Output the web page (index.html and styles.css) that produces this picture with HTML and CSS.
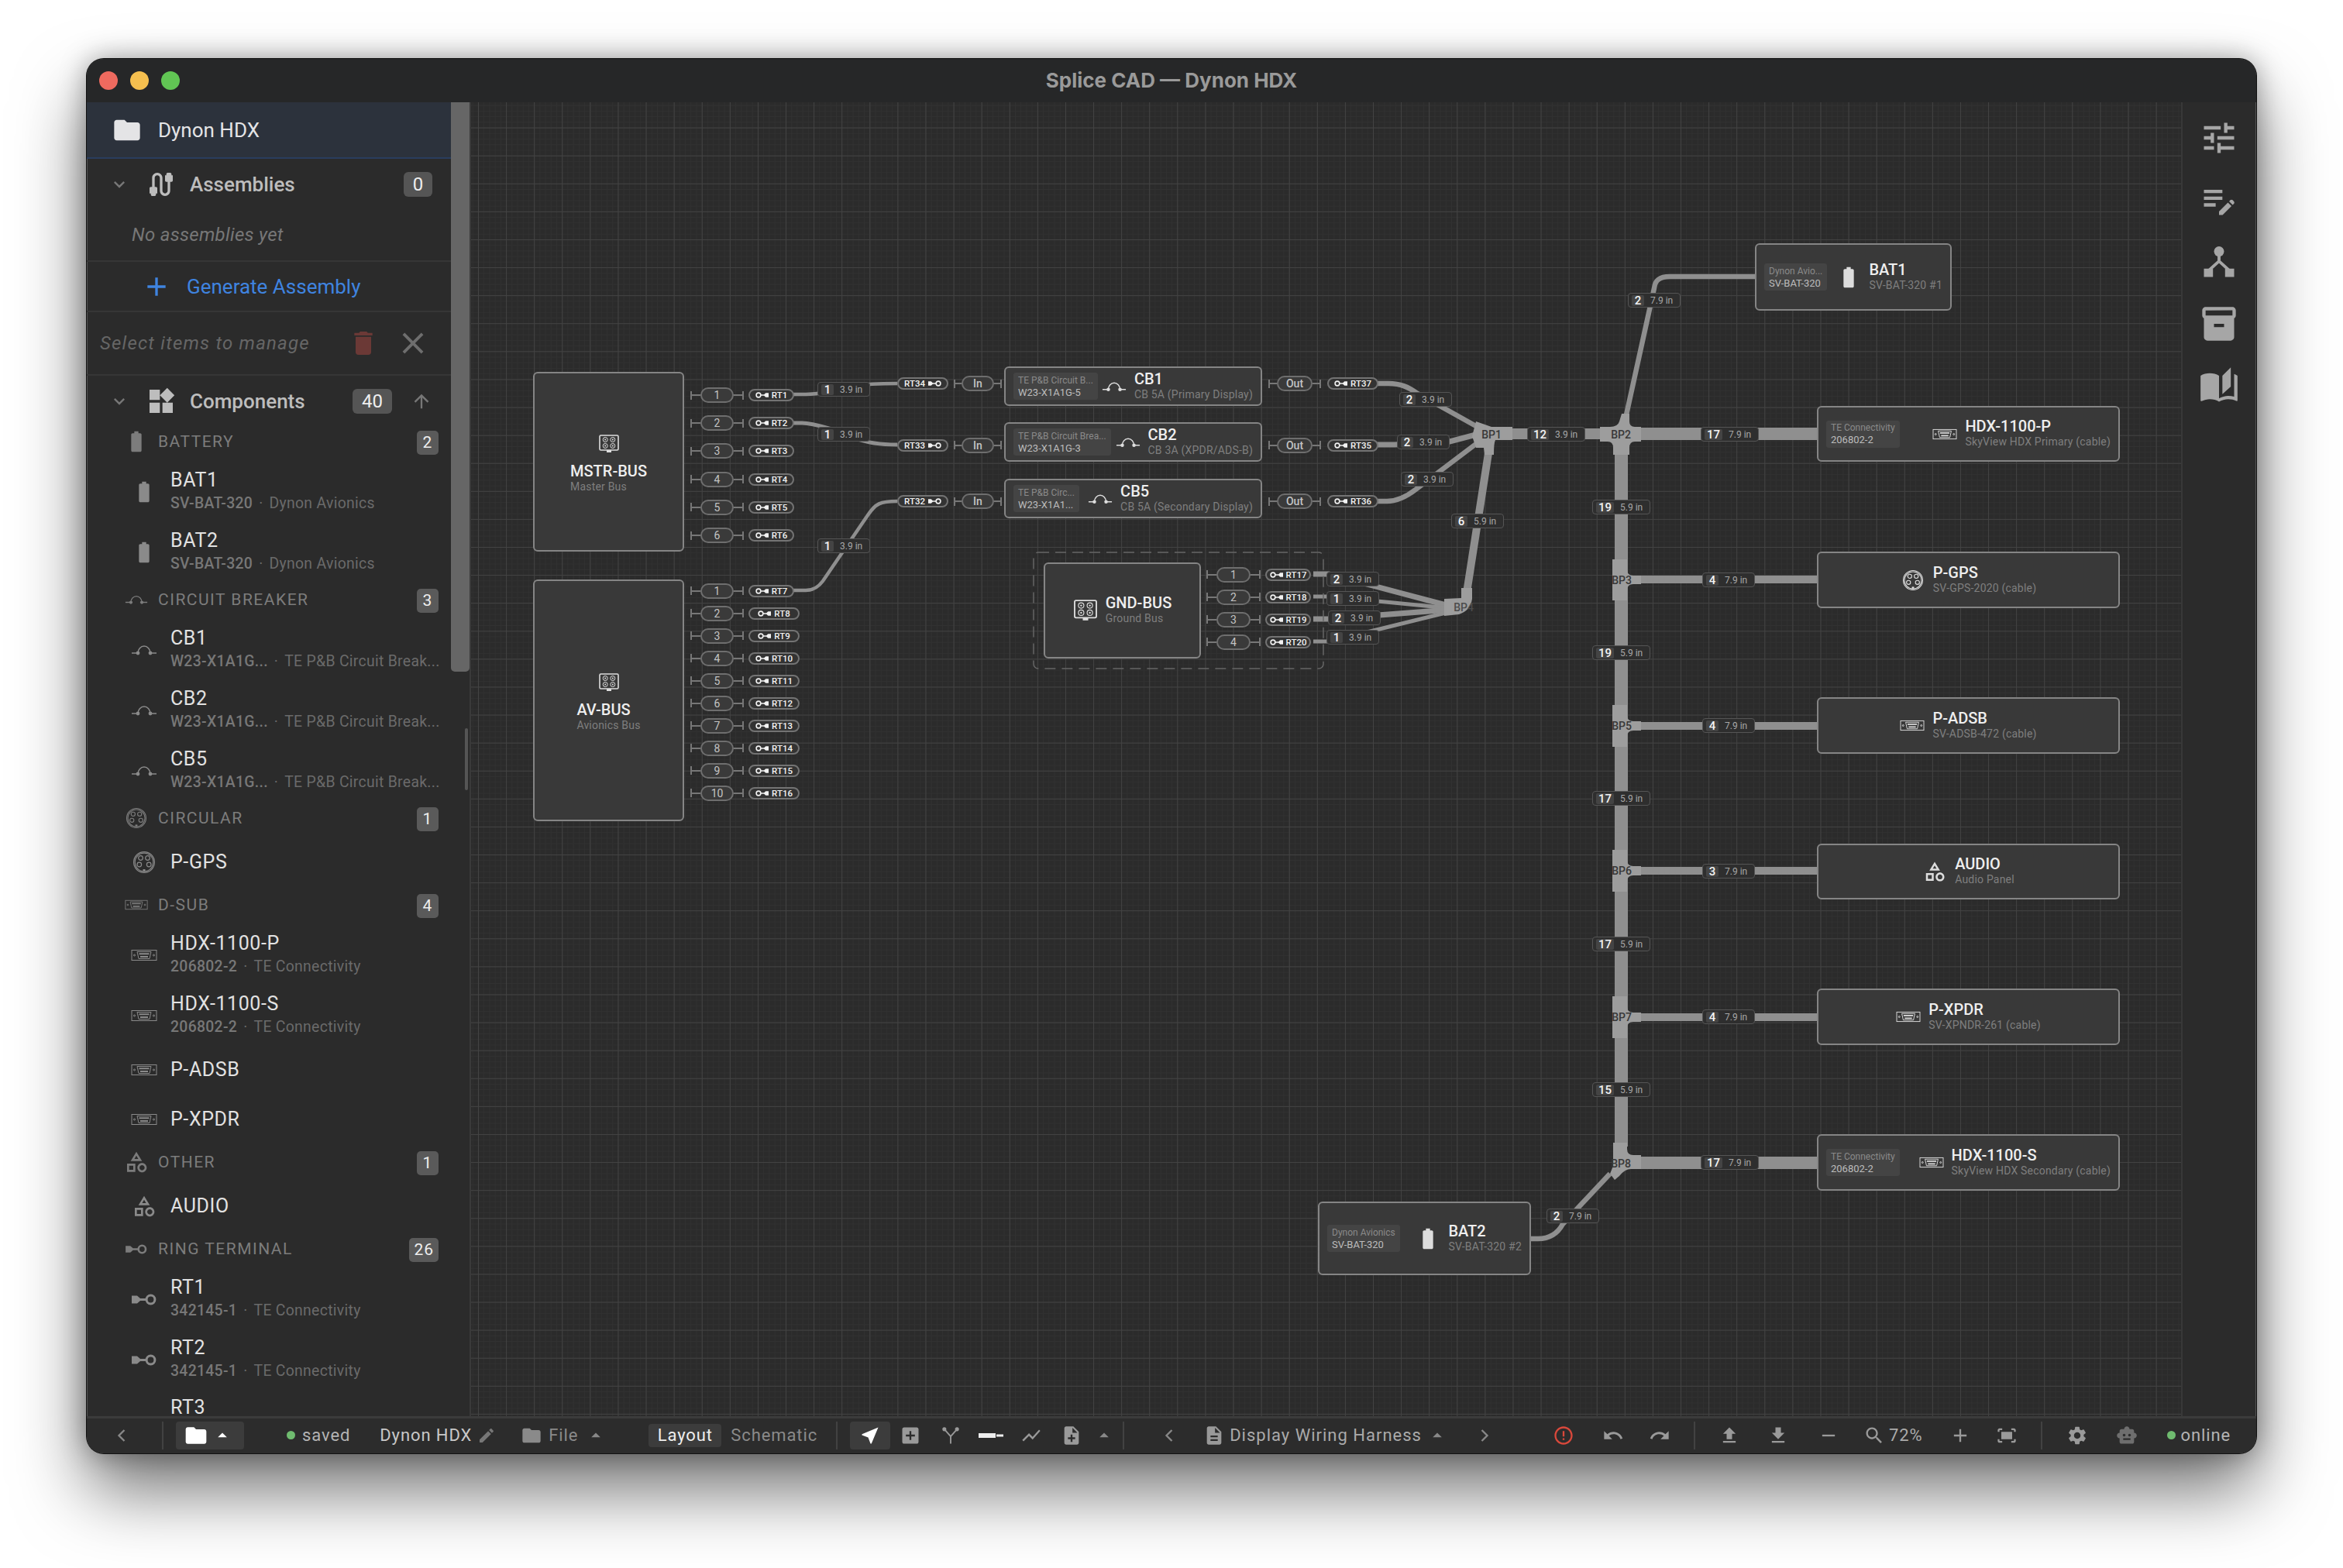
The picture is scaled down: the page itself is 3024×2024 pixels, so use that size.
FILE: index.html
```html
<!DOCTYPE html>
<html lang="en">
<head>
    <meta charset="UTF-8">
    <title>Splice CAD — Dynon HDX</title>
    <link rel="stylesheet" href="styles.css">
</head>
<body>
    <svg class="defs" width="0" height="0">
        <symbol id="i-folder" viewBox="0 0 24 24"><path d="M10 4H4c-1.1 0-1.99.9-1.99 2L2 18c0 1.1.9 2 2 2h16c1.1 0 2-.9 2-2V8c0-1.1-.9-2-2-2h-8l-2-2z"/></symbol>
        <symbol id="i-more" viewBox="0 0 24 24"><path d="M16.59 8.59L12 13.17 7.41 8.59 6 10l6 6 6-6z"/></symbol>
        <symbol id="i-cable" viewBox="0 0 24 24"><path d="M20 5V4c0-.55-.45-1-1-1h-2c-.55 0-1 .45-1 1v1h-1v4c0 .55.45 1 1 1h1v7c0 1.1-.9 2-2 2s-2-.9-2-2V7c0-2.21-1.79-4-4-4S5 4.79 5 7v7H4c-.55 0-1 .45-1 1v4h1v1c0 .55.45 1 1 1h2c.55 0 1-.45 1-1v-1h1v-4c0-.55-.45-1-1-1H7V7c0-1.1.9-2 2-2s2 .9 2 2v10c0 2.21 1.79 4 4 4s4-1.79 4-4v-7h1c.55 0 1-.45 1-1V5h-1z"/></symbol>
        <symbol id="i-add" viewBox="0 0 24 24"><path d="M19 13h-6v6h-2v-6H5v-2h6V5h2v6h6v2z"/></symbol>
        <symbol id="i-trash" viewBox="0 0 24 24"><path d="M6 19c0 1.1.9 2 2 2h8c1.1 0 2-.9 2-2V7H6v12zM19 4h-3.5l-1-1h-5l-1 1H5v2h14V4z"/></symbol>
        <symbol id="i-close" viewBox="0 0 24 24"><path d="M19 6.41L17.59 5 12 10.59 6.41 5 5 6.41 10.59 12 5 17.59 6.41 19 12 13.41 17.59 19 19 17.59 13.41 12z"/></symbol>
        <symbol id="i-widgets" viewBox="0 0 24 24"><path d="M13 13v8h8v-8h-8zM3 21h8v-8H3v8zM3 3v8h8V3H3zm13.66-1.31L11 7.34 16.66 13l5.66-5.66-5.66-5.65z"/></symbol>
        <symbol id="i-up" viewBox="0 0 24 24"><path d="M4 12l1.41 1.41L11 7.83V20h2V7.83l5.58 5.59L20 12l-8-8-8 8z"/></symbol>
        <symbol id="i-battery" viewBox="0 0 24 24"><path d="M15.67 4H14V2h-4v2H8.33C7.6 4 7 4.6 7 5.33v15.33C7 21.4 7.6 22 8.33 22h7.33c.74 0 1.34-.6 1.34-1.33V5.33C17 4.6 16.4 4 15.67 4z"/></symbol>
        <symbol id="i-breaker" viewBox="0 0 34 24"><path d="M1 16h8M25 16h8M9 16a8 9 0 0 1 16 0" fill="none" stroke="currentColor" stroke-width="1.5"/><circle cx="9" cy="16" r="2.4"/><circle cx="25" cy="16" r="2.4"/></symbol>
        <symbol id="i-circular" viewBox="0 0 30 30"><g fill="none" stroke="currentColor" stroke-width="1.2"><circle cx="15" cy="15" r="13.4"/><circle cx="15" cy="15" r="11.8"/><circle cx="10.5" cy="9.5" r="2.8"/><circle cx="19.5" cy="9.5" r="2.8"/><circle cx="8.8" cy="18" r="2.8"/><circle cx="21.2" cy="18" r="2.8"/></g><rect x="13.5" y="24" width="3" height="3"/></symbol>
        <symbol id="i-dsub" viewBox="0 0 34 16"><g fill="none" stroke="currentColor" stroke-width="1"><rect x="1" y="1.5" width="32" height="13"/><path d="M8 3.5h18l-2 9H10z"/><circle cx="4.5" cy="8" r="1"/><circle cx="29.5" cy="8" r="1"/></g><path d="M10.5 5.2h13v2h-13zM12 9h10v2H12z"/></symbol>
        <symbol id="i-other" viewBox="0 0 24 24"><path d="M12 2l-5.5 9h11L12 2zm0 3.84L13.93 9h-3.87L12 5.84zM17.5 13c-2.49 0-4.5 2.01-4.5 4.5s2.01 4.5 4.5 4.5 4.5-2.01 4.5-4.5-2.01-4.5-4.5-4.5zm0 7c-1.38 0-2.5-1.12-2.5-2.5s1.12-2.5 2.5-2.5 2.5 1.12 2.5 2.5-1.12 2.5-2.5 2.5zM3 21.5h8v-8H3v8zm2-6h4v4H5v-4z"/></symbol>
        <symbol id="i-ring" viewBox="0 0 32 15"><path d="M0 2.5h7l4 3.5h8v3h-8l-4 3.5H0z"/><circle cx="24.5" cy="7.5" r="5.4" fill="none" stroke="currentColor" stroke-width="3"/></symbol>
        <symbol id="i-ring-r" viewBox="0 0 32 15"><path d="M32 2.5h-7l-4 3.5h-8v3h8l4 3.5h7z"/><circle cx="7.5" cy="7.5" r="5.4" fill="none" stroke="currentColor" stroke-width="3"/></symbol>
        <symbol id="i-bus" viewBox="0 0 26 24"><rect x="1" y="1" width="24" height="19" rx="1.5" fill="none" stroke="currentColor" stroke-width="1.6"/><g fill="none" stroke="currentColor" stroke-width="1"><circle cx="8.2" cy="6.5" r="3"/><circle cx="17.8" cy="6.5" r="3"/><circle cx="8.2" cy="14.5" r="3"/><circle cx="17.8" cy="14.5" r="3"/></g><circle cx="8.2" cy="6.5" r="1"/><circle cx="17.8" cy="6.5" r="1"/><circle cx="8.2" cy="14.5" r="1"/><circle cx="17.8" cy="14.5" r="1"/><rect x="10" y="20" width="6" height="3"/></symbol>
        <symbol id="i-tune" viewBox="0 0 24 24"><path d="M3 17v2h6v-2H3zM3 5v2h10V5H3zm10 16v-2h8v-2h-8v-2h-2v6h2zM7 9v2H3v2h4v2h2V9H7zm14 4v-2H11v2h10zm-6-4h2V7h4V5h-4V3h-2v6z"/></symbol>
        <symbol id="i-note" viewBox="0 0 24 24"><path d="M3 10h11v2H3v-2zm0-2h11V6H3v2zm0 8h7v-2H3v2zm15.01-3.13.71-.71c.39-.39 1.02-.39 1.41 0l.71.71c.39.39.39 1.02 0 1.41l-.71.71-2.12-2.12zm-.71.71-5.3 5.3V21h2.12l5.3-5.3-2.12-2.12z"/></symbol>
        <symbol id="i-tree" viewBox="0 0 24 24"><circle cx="12" cy="5.8" r="3"/><path d="M12 8v3.6M12 11.6L6 17M12 11.6L18 17" fill="none" stroke="currentColor" stroke-width="1.8"/><path d="M3 16h5.4v5H3zM15.6 16H21v5h-5.4z"/></symbol>
        <symbol id="i-archive" viewBox="0 0 24 24"><path d="M20 2H4c-1 0-2 .9-2 2v3.01c0 .72.43 1.34 1 1.69V20c0 1.1 1.1 2 2 2h14c.9 0 2-.9 2-2V8.7c.57-.35 1-.97 1-1.69V4c0-1.1-1-2-2-2zm-5 12H9v-2h6v2zm5-7H4V4l16-.02V7z"/></symbol>
        <symbol id="i-book" viewBox="0 0 24 24"><path d="M19 1l-5 5v11l5-4.5V1zM1 6v14.65c0 .25.25.5.5.5.1 0 .15-.05.25-.05C3.1 20.45 5.05 20 6.5 20c1.95 0 4.05.4 5.5 1.5V6c-1.45-1.1-3.55-1.5-5.5-1.5S2.45 4.9 1 6zm22 13.5V6c-.6-.45-1.25-.75-2-1v13.5c-1.1-.35-2.3-.5-3.5-.5-1.7 0-4.15.65-5.5 1.5v2c1.35-.85 3.8-1.5 5.5-1.5 1.65 0 3.35.3 4.75 1.05.1.05.15.05.25.05.25 0 .5-.25.5-.5v-1.1z"/></symbol>
        <symbol id="i-left" viewBox="0 0 24 24"><path d="M15 6l-6 6 6 6" fill="none" stroke="currentColor" stroke-width="2"/></symbol>
        <symbol id="i-right" viewBox="0 0 24 24"><path d="M9 6l6 6-6 6" fill="none" stroke="currentColor" stroke-width="2"/></symbol>
        <symbol id="i-caret" viewBox="0 0 24 24"><path d="M7 14l5-5 5 5z"/></symbol>
        <symbol id="i-edit" viewBox="0 0 24 24"><path d="M3 17.25V21h3.75L17.81 9.94l-3.75-3.75L3 17.25zM20.71 7.04c.39-.39.39-1.02 0-1.41l-2.34-2.34c-.39-.39-1.02-.39-1.41 0l-1.83 1.83 3.75 3.75 1.83-1.83z"/></symbol>
        <symbol id="i-nearme" viewBox="0 0 24 24"><path d="M21 3L3 10.53v.98l6.84 2.65L12.48 21h.98L21 3z"/></symbol>
        <symbol id="i-addbox" viewBox="0 0 24 24"><path d="M19 3H5c-1.1 0-2 .9-2 2v14c0 1.1.9 2 2 2h14c1.1 0 2-.9 2-2V5c0-1.1-.9-2-2-2zm-2 10h-4v4h-2v-4H7v-2h4V7h2v4h4v2z"/></symbol>
        <symbol id="i-split" viewBox="0 0 24 24"><path d="M5 5l7 8v8M19 5l-7 8" fill="none" stroke="currentColor" stroke-width="1.6"/><circle cx="5" cy="5" r="2.2"/><circle cx="19" cy="5" r="2.2"/></symbol>
        <symbol id="i-wire" viewBox="0 0 32 12"><path d="M0 3h22v6H0zM23 4.5h9v3h-9z"/></symbol>
        <symbol id="i-chart" viewBox="0 0 24 24"><path d="M3.5 18.49l6-6.01 4 4L22 6.92l-1.41-1.41-7.09 7.97-4-4L2 16.99z"/></symbol>
        <symbol id="i-noteadd" viewBox="0 0 24 24"><path d="M14 2H6c-1.1 0-1.99.9-1.99 2L4 20c0 1.1.89 2 1.99 2H18c1.1 0 2-.9 2-2V8l-6-6zm2 14h-3v3h-2v-3H8v-2h3v-3h2v3h3v2zm-3-7V3.5L18.5 9H13z"/></symbol>
        <symbol id="i-doc" viewBox="0 0 24 24"><path d="M14 2H6c-1.1 0-1.99.9-1.99 2L4 20c0 1.1.89 2 1.99 2H18c1.1 0 2-.9 2-2V8l-6-6zm2 16H8v-2h8v2zm0-4H8v-2h8v2zm-3-5V3.5L18.5 9H13z"/></symbol>
        <symbol id="i-error" viewBox="0 0 24 24"><path d="M11 15h2v2h-2zm0-8h2v6h-2zm.99-5C6.47 2 2 6.48 2 12s4.47 10 9.99 10C17.52 22 22 17.52 22 12S17.52 2 11.99 2zM12 20c-4.42 0-8-3.58-8-8s3.58-8 8-8 8 3.58 8 8-3.58 8-8 8z"/></symbol>
        <symbol id="i-undo" viewBox="0 0 24 24"><path d="M12.5 8c-2.65 0-5.05.99-6.9 2.6L2 7v9h9l-3.62-3.62c1.39-1.16 3.16-1.88 5.12-1.88 3.54 0 6.55 2.31 7.6 5.5l2.37-.78C21.08 11.03 17.15 8 12.5 8z"/></symbol>
        <symbol id="i-redo" viewBox="0 0 24 24"><path d="M18.4 10.6C16.55 8.99 14.15 8 11.5 8c-4.65 0-8.58 3.03-9.96 7.22L3.9 16c1.05-3.19 4.05-5.5 7.6-5.5 1.95 0 3.73.72 5.12 1.88L13 16h9V7l-3.6 3.6z"/></symbol>
        <symbol id="i-upload" viewBox="0 0 24 24"><path d="M9 16h6v-6h4l-7-7-7 7h4zm-4 2h14v2H5z"/></symbol>
        <symbol id="i-download" viewBox="0 0 24 24"><path d="M19 9h-4V3H9v6H5l7 7 7-7zM5 18v2h14v-2H5z"/></symbol>
        <symbol id="i-minus" viewBox="0 0 24 24"><path d="M19 13H5v-2h14v2z"/></symbol>
        <symbol id="i-search" viewBox="0 0 24 24"><path d="M15.5 14h-.79l-.28-.27C15.41 12.59 16 11.11 16 9.5 16 5.91 13.09 3 9.5 3S3 5.91 3 9.5 5.91 16 9.5 16c1.61 0 3.09-.59 4.23-1.57l.27.28v.79l5 4.99L20.49 19l-4.99-5zm-6 0C7.01 14 5 11.99 5 9.5S7.01 5 9.5 5 14 7.01 14 9.5 11.99 14 9.5 14z"/></symbol>
        <symbol id="i-fit" viewBox="0 0 24 24"><path d="M17 4h3c1.1 0 2 .9 2 2v2h-2V6h-3V4zM4 8V6h3V4H4c-1.1 0-2 .9-2 2v2h2zm16 8v2h-3v2h3c1.1 0 2-.9 2-2v-2h-2zM7 18H4v-2H2v2c0 1.1.9 2 2 2h3v-2zM18 8H6v8h12V8z"/></symbol>
        <symbol id="i-gear" viewBox="0 0 24 24"><path d="M19.14 12.94c.04-.3.06-.61.06-.94 0-.32-.02-.64-.07-.94l2.03-1.58c.18-.14.23-.41.12-.61l-1.92-3.32c-.12-.22-.37-.29-.59-.22l-2.39.96c-.5-.38-1.03-.7-1.62-.94l-.36-2.54c-.04-.24-.24-.41-.48-.41h-3.84c-.24 0-.43.17-.47.41l-.36 2.54c-.59.24-1.13.57-1.62.94l-2.39-.96c-.22-.08-.47 0-.59.22L2.74 8.87c-.12.21-.08.47.12.61l2.03 1.58c-.05.3-.09.63-.09.94s.02.64.07.94l-2.03 1.58c-.18.14-.23.41-.12.61l1.92 3.32c.12.22.37.29.59.22l2.39-.96c.5.38 1.03.7 1.62.94l.36 2.54c.05.24.24.41.48.41h3.84c.24 0 .44-.17.47-.41l.36-2.54c.59-.24 1.13-.56 1.62-.94l2.39.96c.22.08.47 0 .59-.22l1.92-3.32c.12-.22.07-.47-.12-.61l-2.01-1.58zM12 15.6c-1.98 0-3.6-1.62-3.6-3.6s1.62-3.6 3.6-3.6 3.6 1.62 3.6 3.6-1.62 3.6-3.6 3.6z"/></symbol>
        <symbol id="i-robot" viewBox="0 0 24 24"><path d="M20 9V7c0-1.1-.9-2-2-2h-3c0-1.66-1.34-3-3-3S9 3.34 9 5H6c-1.1 0-2 .9-2 2v2c-1.66 0-3 1.34-3 3s1.34 3 3 3v4c0 1.1.9 2 2 2h12c1.1 0 2-.9 2-2v-4c1.66 0 3-1.34 3-3s-1.34-3-3-3zM7.5 11.5c0-.83.67-1.5 1.5-1.5s1.5.67 1.5 1.5S9.83 13 9 13s-1.5-.67-1.5-1.5zM16 17H8v-2h8v2zm-1-4c-.83 0-1.5-.67-1.5-1.5S14.17 10 15 10s1.5.67 1.5 1.5S15.83 13 15 13z"/></symbol>
    </svg>

    <div class="window">
        <div class="titlebar">
            <div class="lights"><i class="light red"></i><i class="light yellow"></i><i class="light green"></i></div>
            <div class="title">Splice CAD — Dynon HDX</div>
        </div>

        <div class="main">
            <aside class="sidebar">
                <div class="side-list">
                    <div class="proj"><svg class="ic proj-ic"><use href="#i-folder"/></svg><span>Dynon HDX</span></div>
                    <div class="sec sec-asm">
                        <svg class="ic sec-more"><use href="#i-more"/></svg>
                        <svg class="ic sec-ic"><use href="#i-cable"/></svg>
                        <span class="sec-name">Assemblies</span>
                        <span class="badge">0</span>
                    </div>
                    <div class="empty">No assemblies yet</div>
                    <div class="gen"><svg class="ic"><use href="#i-add"/></svg><span>Generate Assembly</span></div>
                    <div class="manage">
                        <span>Select items to manage</span>
                        <svg class="ic trash"><use href="#i-trash"/></svg>
                        <svg class="ic close"><use href="#i-close"/></svg>
                    </div>
                    <div class="sec sec-comp">
                        <svg class="ic sec-more"><use href="#i-more"/></svg>
                        <svg class="ic sec-ic"><use href="#i-widgets"/></svg>
                        <span class="sec-name">Components</span>
                        <span class="badge">40</span>
                        <svg class="ic sec-up"><use href="#i-up"/></svg>
                    </div>

                    <div class="grp"><span class="grp-ic"><svg class="ic ic-std"><use href="#i-battery"/></svg></span><span class="grp-name">BATTERY</span><span class="count">2</span></div>
                    <div class="item"><span class="item-ic"><svg class="ic ic-std"><use href="#i-battery"/></svg></span><div class="item-txt"><div class="item-name">BAT1</div><div class="item-sub"><b>SV-BAT-320</b><i>·</i>Dynon Avionics</div></div></div>
                    <div class="item"><span class="item-ic"><svg class="ic ic-std"><use href="#i-battery"/></svg></span><div class="item-txt"><div class="item-name">BAT2</div><div class="item-sub"><b>SV-BAT-320</b><i>·</i>Dynon Avionics</div></div></div>

                    <div class="grp"><span class="grp-ic"><svg class="ic ic-brk"><use href="#i-breaker"/></svg></span><span class="grp-name">CIRCUIT BREAKER</span><span class="count">3</span></div>
                    <div class="item"><span class="item-ic"><svg class="ic ic-brk"><use href="#i-breaker"/></svg></span><div class="item-txt"><div class="item-name">CB1</div><div class="item-sub"><b>W23-X1A1G...</b><i>·</i>TE P&amp;B Circuit Break...</div></div></div>
                    <div class="item"><span class="item-ic"><svg class="ic ic-brk"><use href="#i-breaker"/></svg></span><div class="item-txt"><div class="item-name">CB2</div><div class="item-sub"><b>W23-X1A1G...</b><i>·</i>TE P&amp;B Circuit Break...</div></div></div>
                    <div class="item"><span class="item-ic"><svg class="ic ic-brk"><use href="#i-breaker"/></svg></span><div class="item-txt"><div class="item-name">CB5</div><div class="item-sub"><b>W23-X1A1G...</b><i>·</i>TE P&amp;B Circuit Break...</div></div></div>

                    <div class="grp"><span class="grp-ic"><svg class="ic ic-circ"><use href="#i-circular"/></svg></span><span class="grp-name">CIRCULAR</span><span class="count">1</span></div>
                    <div class="item one"><span class="item-ic"><svg class="ic ic-circ"><use href="#i-circular"/></svg></span><div class="item-txt"><div class="item-name">P-GPS</div></div></div>

                    <div class="grp"><span class="grp-ic"><svg class="ic ic-dsub"><use href="#i-dsub"/></svg></span><span class="grp-name">D-SUB</span><span class="count">4</span></div>
                    <div class="item"><span class="item-ic"><svg class="ic ic-dsub"><use href="#i-dsub"/></svg></span><div class="item-txt"><div class="item-name">HDX-1100-P</div><div class="item-sub"><b>206802-2</b><i>·</i>TE Connectivity</div></div></div>
                    <div class="item"><span class="item-ic"><svg class="ic ic-dsub"><use href="#i-dsub"/></svg></span><div class="item-txt"><div class="item-name">HDX-1100-S</div><div class="item-sub"><b>206802-2</b><i>·</i>TE Connectivity</div></div></div>
                    <div class="item one"><span class="item-ic"><svg class="ic ic-dsub"><use href="#i-dsub"/></svg></span><div class="item-txt"><div class="item-name">P-ADSB</div></div></div>
                    <div class="item one"><span class="item-ic"><svg class="ic ic-dsub"><use href="#i-dsub"/></svg></span><div class="item-txt"><div class="item-name">P-XPDR</div></div></div>

                    <div class="grp"><span class="grp-ic"><svg class="ic ic-std"><use href="#i-other"/></svg></span><span class="grp-name">OTHER</span><span class="count">1</span></div>
                    <div class="item one"><span class="item-ic"><svg class="ic ic-std"><use href="#i-other"/></svg></span><div class="item-txt"><div class="item-name">AUDIO</div></div></div>

                    <div class="grp"><span class="grp-ic"><svg class="ic ic-ring"><use href="#i-ring"/></svg></span><span class="grp-name">RING TERMINAL</span><span class="count">26</span></div>
                    <div class="item"><span class="item-ic"><svg class="ic ic-ring"><use href="#i-ring"/></svg></span><div class="item-txt"><div class="item-name">RT1</div><div class="item-sub"><b>342145-1</b><i>·</i>TE Connectivity</div></div></div>
                    <div class="item"><span class="item-ic"><svg class="ic ic-ring"><use href="#i-ring"/></svg></span><div class="item-txt"><div class="item-name">RT2</div><div class="item-sub"><b>342145-1</b><i>·</i>TE Connectivity</div></div></div>
                    <div class="item cut"><span class="item-ic"><svg class="ic ic-ring"><use href="#i-ring"/></svg></span><div class="item-txt"><div class="item-name">RT3</div></div></div>
                </div>
                <div class="rail"><div class="thumb"></div></div>
                <div class="thumb-thin"></div>
            </aside>

            <div class="canvas">
                <svg class="wires" viewBox="608 132 2207 1696">
                    <g class="w">
                        <path class="w4" d="M1021 509H1040C1048 509 1060 508 1075 504L1105 498C1115 496 1130 495 1158 495"/>
                        <path class="w5" d="M1021 546H1035C1050 546 1065 552 1080 556L1105 566C1120 572 1135 574 1158 574"/>
                        <path class="w4" d="M1021 762H1040C1050 762 1056 758 1062 750L1120 665C1130 650 1136 647 1158 647"/>
                        <path class="w6" d="M1774 495H1792C1808 495 1818 500 1828 507L1905 550"/>
                        <path class="w7" d="M1774 574H1800L1871 570L1905 561"/>
                        <path class="w6" d="M1774 647H1790C1802 647 1814 642 1827 632L1905 573"/>
                        <path class="w14" d="M1950 560H2070"/>
                        <path class="w10" d="M1893 765L1921 585"/>
                        <path class="w7" d="M1695 741H1715L1870 782"/>
                        <path class="w5" d="M1695 770H1715L1870 785"/>
                        <path class="w7" d="M1695 799H1715L1870 787"/>
                        <path class="w5" d="M1695 828H1715L1870 790"/>
                        <path class="w17" d="M2092.5 575V1480"/>
                        <path class="w16" d="M2110 560H2345"/>
                        <path class="w16" d="M2110 1501H2345"/>
                        <path class="w10" d="M2110 748H2345M2110 937H2345M2110 1124H2345M2110 1313H2345"/>
                        <path class="w6" d="M2265 357H2155C2142 357 2136 362 2135 372L2098 540"/>
                        <path class="w6" d="M1976 1599H1985C2000 1599 2010 1593 2017 1580L2078 1515"/>
                    </g>
                    <g class="bp">
                        <path d="M1905 544L1925 551H1952V568H1930Q1928 572 1928 587H1916L1915 578H1905L1900 563Z"/>
                        <path d="M2093 534H2103V544Q2103 551 2110 551H2118V570H2110Q2103 570 2103 578V587H2082V578Q2082 570 2075 570H2065V551H2078Q2088 551 2090 544Z"/>
                        <path d="M2081 722H2100V735Q2100 743 2108 743H2118V754H2108Q2100 754 2100 762V775H2081Z"/>
                        <path d="M2081 910H2100V923Q2100 931 2108 931H2118V943H2108Q2100 943 2100 951V964H2081Z"/>
                        <path d="M2081 1097H2100V1110Q2100 1118 2108 1118H2118V1130H2108Q2100 1130 2100 1138V1151H2081Z"/>
                        <path d="M2081 1286H2100V1299Q2100 1307 2108 1307H2118V1319H2108Q2100 1319 2100 1327V1340H2081Z"/>
                        <path d="M2082 1475H2100V1483Q2100 1491 2108 1491H2118V1509H2105Q2097 1509 2090 1518L2084 1523L2078 1515L2082 1505Z"/>
                        <path d="M1864 773L1886 772V759H1900V773Q1898 788 1883 793L1864 795Z"/>
                    </g>
                </svg>

                <div class="bp-name at-bp1">BP1</div>
                <div class="bp-name at-bp2">BP2</div>
                <div class="bp-name at-bp3">BP3</div>
                <div class="bp-name at-bp5">BP5</div>
                <div class="bp-name at-bp6">BP6</div>
                <div class="bp-name at-bp7">BP7</div>
                <div class="bp-name at-bp8">BP8</div>
                <div class="bp-name at-bp4">BP4</div>

                <div class="node bus at-mstr">
                    <svg class="ic bus-ic"><use href="#i-bus"/></svg>
                    <div class="txt"><div class="name">MSTR-BUS</div><div class="desc">Master Bus</div></div>
                </div>
                <div class="ports ports-mstr">
                    <div class="port"><div class="pin"><span>1</span></div><div class="chip"><svg class="ring"><use href="#i-ring-r"/></svg>RT1</div></div>
                    <div class="port"><div class="pin"><span>2</span></div><div class="chip"><svg class="ring"><use href="#i-ring-r"/></svg>RT2</div></div>
                    <div class="port"><div class="pin"><span>3</span></div><div class="chip"><svg class="ring"><use href="#i-ring-r"/></svg>RT3</div></div>
                    <div class="port"><div class="pin"><span>4</span></div><div class="chip"><svg class="ring"><use href="#i-ring-r"/></svg>RT4</div></div>
                    <div class="port"><div class="pin"><span>5</span></div><div class="chip"><svg class="ring"><use href="#i-ring-r"/></svg>RT5</div></div>
                    <div class="port"><div class="pin"><span>6</span></div><div class="chip"><svg class="ring"><use href="#i-ring-r"/></svg>RT6</div></div>
                </div>

                <div class="node bus at-av">
                    <svg class="ic bus-ic"><use href="#i-bus"/></svg>
                    <div class="txt"><div class="name">AV-BUS</div><div class="desc">Avionics Bus</div></div>
                </div>
                <div class="ports ports-av">
                    <div class="port"><div class="pin"><span>1</span></div><div class="chip chip-s"><svg class="ring"><use href="#i-ring-r"/></svg>RT7</div></div>
                    <div class="port"><div class="pin"><span>2</span></div><div class="chip"><svg class="ring"><use href="#i-ring-r"/></svg>RT8</div></div>
                    <div class="port"><div class="pin"><span>3</span></div><div class="chip"><svg class="ring"><use href="#i-ring-r"/></svg>RT9</div></div>
                    <div class="port"><div class="pin"><span>4</span></div><div class="chip"><svg class="ring"><use href="#i-ring-r"/></svg>RT10</div></div>
                    <div class="port"><div class="pin"><span>5</span></div><div class="chip"><svg class="ring"><use href="#i-ring-r"/></svg>RT11</div></div>
                    <div class="port"><div class="pin"><span>6</span></div><div class="chip"><svg class="ring"><use href="#i-ring-r"/></svg>RT12</div></div>
                    <div class="port"><div class="pin"><span>7</span></div><div class="chip"><svg class="ring"><use href="#i-ring-r"/></svg>RT13</div></div>
                    <div class="port"><div class="pin"><span>8</span></div><div class="chip"><svg class="ring"><use href="#i-ring-r"/></svg>RT14</div></div>
                    <div class="port"><div class="pin"><span>9</span></div><div class="chip"><svg class="ring"><use href="#i-ring-r"/></svg>RT15</div></div>
                    <div class="port"><div class="pin"><span>10</span></div><div class="chip"><svg class="ring"><use href="#i-ring-r"/></svg>RT16</div></div>
                </div>

                <div class="port cb-in at-cb1-row"><div class="chip"><span>RT34</span><svg class="ring"><use href="#i-ring"/></svg></div><div class="pin pin-s"><span>In</span></div></div>
                <div class="port cb-in at-cb2-row"><div class="chip"><span>RT33</span><svg class="ring"><use href="#i-ring"/></svg></div><div class="pin pin-s"><span>In</span></div></div>
                <div class="port cb-in at-cb5-row"><div class="chip"><span>RT32</span><svg class="ring"><use href="#i-ring"/></svg></div><div class="pin pin-s"><span>In</span></div></div>
                <div class="port cb-out at-cb1-row"><div class="pin pin-o"><span>Out</span></div><div class="chip"><svg class="ring"><use href="#i-ring-r"/></svg>RT37</div></div>
                <div class="port cb-out at-cb2-row"><div class="pin pin-o"><span>Out</span></div><div class="chip"><svg class="ring"><use href="#i-ring-r"/></svg>RT35</div></div>
                <div class="port cb-out at-cb5-row"><div class="pin pin-o"><span>Out</span></div><div class="chip"><svg class="ring"><use href="#i-ring-r"/></svg>RT36</div></div>

                <div class="node at-cb1">
                    <div class="mfg"><span>TE P&amp;B Circuit B...</span><b>W23-X1A1G-5</b></div>
                    <div class="body"><svg class="ic node-ic ic-brk"><use href="#i-breaker"/></svg><div class="txt"><div class="name">CB1</div><div class="desc">CB 5A (Primary Display)</div></div></div>
                </div>
                <div class="node at-cb2">
                    <div class="mfg"><span>TE P&amp;B Circuit Brea...</span><b>W23-X1A1G-3</b></div>
                    <div class="body"><svg class="ic node-ic ic-brk"><use href="#i-breaker"/></svg><div class="txt"><div class="name">CB2</div><div class="desc">CB 3A (XPDR/ADS-B)</div></div></div>
                </div>
                <div class="node at-cb5">
                    <div class="mfg"><span>TE P&amp;B Circ...</span><b>W23-X1A1...</b></div>
                    <div class="body"><svg class="ic node-ic ic-brk"><use href="#i-breaker"/></svg><div class="txt"><div class="name">CB5</div><div class="desc">CB 5A (Secondary Display)</div></div></div>
                </div>

                <div class="gnd-group">
                    <svg class="dash"><rect x="1" y="1" width="374" height="150" rx="6"/></svg>
                    <div class="node gnd">
                        <div class="body"><svg class="ic node-ic ic-bus"><use href="#i-bus"/></svg><div class="txt"><div class="name">GND-BUS</div><div class="desc">Ground Bus</div></div></div>
                    </div>
                </div>
                <div class="ports ports-gnd">
                    <div class="port"><div class="pin"><span>1</span></div><div class="chip"><svg class="ring"><use href="#i-ring-r"/></svg>RT17</div></div>
                    <div class="port"><div class="pin"><span>2</span></div><div class="chip"><svg class="ring"><use href="#i-ring-r"/></svg>RT18</div></div>
                    <div class="port"><div class="pin"><span>3</span></div><div class="chip"><svg class="ring"><use href="#i-ring-r"/></svg>RT19</div></div>
                    <div class="port"><div class="pin"><span>4</span></div><div class="chip"><svg class="ring"><use href="#i-ring-r"/></svg>RT20</div></div>
                </div>

                <div class="node at-bat1">
                    <div class="mfg"><span>Dynon Avio...</span><b>SV-BAT-320</b></div>
                    <div class="body"><svg class="ic node-ic ic-bat"><use href="#i-battery"/></svg><div class="txt"><div class="name">BAT1</div><div class="desc">SV-BAT-320 #1</div></div></div>
                </div>
                <div class="node at-bat2">
                    <div class="mfg"><span>Dynon Avionics</span><b>SV-BAT-320</b></div>
                    <div class="body"><svg class="ic node-ic ic-bat"><use href="#i-battery"/></svg><div class="txt"><div class="name">BAT2</div><div class="desc">SV-BAT-320 #2</div></div></div>
                </div>
                <div class="node at-hdxp">
                    <div class="mfg"><span>TE Connectivity</span><b>206802-2</b></div>
                    <div class="body"><svg class="ic node-ic ic-sub"><use href="#i-dsub"/></svg><div class="txt"><div class="name">HDX-1100-P</div><div class="desc">SkyView HDX Primary (cable)</div></div></div>
                </div>
                <div class="node at-gps">
                    <div class="body"><svg class="ic node-ic ic-cir"><use href="#i-circular"/></svg><div class="txt"><div class="name">P-GPS</div><div class="desc">SV-GPS-2020 (cable)</div></div></div>
                </div>
                <div class="node at-adsb">
                    <div class="body"><svg class="ic node-ic ic-sub"><use href="#i-dsub"/></svg><div class="txt"><div class="name">P-ADSB</div><div class="desc">SV-ADSB-472 (cable)</div></div></div>
                </div>
                <div class="node at-audio">
                    <div class="body"><svg class="ic node-ic ic-oth"><use href="#i-other"/></svg><div class="txt"><div class="name">AUDIO</div><div class="desc">Audio Panel</div></div></div>
                </div>
                <div class="node at-xpdr">
                    <div class="body"><svg class="ic node-ic ic-sub"><use href="#i-dsub"/></svg><div class="txt"><div class="name">P-XPDR</div><div class="desc">SV-XPNDR-261 (cable)</div></div></div>
                </div>
                <div class="node at-hdxs">
                    <div class="mfg"><span>TE Connectivity</span><b>206802-2</b></div>
                    <div class="body"><svg class="ic node-ic ic-sub"><use href="#i-dsub"/></svg><div class="txt"><div class="name">HDX-1100-S</div><div class="desc">SkyView HDX Secondary (cable)</div></div></div>
                </div>

                <div class="wl at-l1"><b>1</b>3.9 in</div>
                <div class="wl at-l2"><b>1</b>3.9 in</div>
                <div class="wl at-l3"><b>1</b>3.9 in</div>
                <div class="wl at-l4"><b>2</b>3.9 in</div>
                <div class="wl at-l5"><b>2</b>3.9 in</div>
                <div class="wl at-l6"><b>2</b>3.9 in</div>
                <div class="wl at-l7"><b>6</b>5.9 in</div>
                <div class="wl at-l8"><b>12</b>3.9 in</div>
                <div class="wl at-g1"><b>2</b>3.9 in</div>
                <div class="wl at-g2"><b>1</b>3.9 in</div>
                <div class="wl at-g3"><b>2</b>3.9 in</div>
                <div class="wl at-g4"><b>1</b>3.9 in</div>
                <div class="wl at-r1"><b>2</b>7.9 in</div>
                <div class="wl at-r2"><b>17</b>7.9 in</div>
                <div class="wl at-r3"><b>4</b>7.9 in</div>
                <div class="wl at-r4"><b>4</b>7.9 in</div>
                <div class="wl at-r5"><b>3</b>7.9 in</div>
                <div class="wl at-r6"><b>4</b>7.9 in</div>
                <div class="wl at-r7"><b>17</b>7.9 in</div>
                <div class="wl at-r8"><b>2</b>7.9 in</div>
                <div class="wl at-t1"><b>19</b>5.9 in</div>
                <div class="wl at-t2"><b>19</b>5.9 in</div>
                <div class="wl at-t3"><b>17</b>5.9 in</div>
                <div class="wl at-t4"><b>17</b>5.9 in</div>
                <div class="wl at-t5"><b>15</b>5.9 in</div>
            </div>

            <div class="rpanel">
                <svg class="ic r-ic"><use href="#i-tune"/></svg>
                <svg class="ic r-ic"><use href="#i-note"/></svg>
                <svg class="ic r-ic"><use href="#i-tree"/></svg>
                <svg class="ic r-ic"><use href="#i-archive"/></svg>
                <svg class="ic r-ic"><use href="#i-book"/></svg>
            </div>
        </div>

        <div class="bbar">
            <svg class="ic bb-ic bb-back"><use href="#i-left"/></svg>
            <i class="bb-div div-a"></i>
            <div class="folder-btn"><svg class="ic bb-folder"><use href="#i-folder"/></svg><svg class="ic bb-caret"><use href="#i-caret"/></svg></div>
            <div class="status st-saved"><i class="dot"></i><span>saved</span></div>
            <span class="bb-text proj-name">Dynon HDX</span>
            <svg class="ic bb-pen"><use href="#i-edit"/></svg>
            <svg class="ic bb-file"><use href="#i-folder"/></svg>
            <span class="bb-text bb-dim file-name">File</span>
            <svg class="ic bb-caret bb-caret-dim caret-file"><use href="#i-caret"/></svg>
            <div class="seg"><span class="seg-on">Layout</span><span class="seg-off">Schematic</span></div>
            <i class="bb-div div-b"></i>
            <div class="tools">
                <span class="tool tool-on"><svg class="ic bb-ic"><use href="#i-nearme"/></svg></span>
                <span class="tool"><svg class="ic bb-ic"><use href="#i-addbox"/></svg></span>
                <span class="tool"><svg class="ic bb-ic"><use href="#i-split"/></svg></span>
                <span class="tool tool-wire"><svg class="ic wire-ic"><use href="#i-wire"/></svg></span>
                <span class="tool"><svg class="ic bb-ic"><use href="#i-chart"/></svg></span>
                <span class="tool"><svg class="ic bb-ic"><use href="#i-noteadd"/></svg></span>
            </div>
            <svg class="ic bb-caret bb-caret-dim caret-tool"><use href="#i-caret"/></svg>
            <i class="bb-div div-c"></i>
            <svg class="ic bb-ic nav-l"><use href="#i-left"/></svg>
            <svg class="ic bb-ic nav-doc"><use href="#i-doc"/></svg>
            <span class="bb-text sheet">Display Wiring Harness</span>
            <svg class="ic bb-caret bb-caret-dim caret-sheet"><use href="#i-caret"/></svg>
            <svg class="ic bb-ic nav-r"><use href="#i-right"/></svg>
            <svg class="ic bb-ic err"><use href="#i-error"/></svg>
            <svg class="ic bb-ic undo"><use href="#i-undo"/></svg>
            <svg class="ic bb-ic redo"><use href="#i-redo"/></svg>
            <i class="bb-div div-d"></i>
            <svg class="ic bb-ic upl"><use href="#i-upload"/></svg>
            <svg class="ic bb-ic dnl"><use href="#i-download"/></svg>
            <svg class="ic bb-ic minus"><use href="#i-minus"/></svg>
            <svg class="ic bb-ic srch"><use href="#i-search"/></svg>
            <span class="bb-text zoomv">72%</span>
            <svg class="ic bb-ic plus"><use href="#i-add"/></svg>
            <svg class="ic bb-ic fit"><use href="#i-fit"/></svg>
            <i class="bb-div div-e"></i>
            <svg class="ic bb-ic gear"><use href="#i-gear"/></svg>
            <svg class="ic bb-ic robot"><use href="#i-robot"/></svg>
            <div class="status st-online"><i class="dot"></i><span>online</span></div>
        </div>
    </div>
</body>
</html>
```

FILE: styles.css
```css
* { box-sizing: border-box; }
html, body { margin: 0; height: 100%; }
body {
    background: #fff;
    font-family: Roboto, "Noto Sans", sans-serif;
    padding: 76px 0 0 112px;
    overflow: hidden;
}
.defs { position: absolute; }
.ic { display: block; fill: currentColor; flex: none; }

.window {
    width: 2800px;
    height: 1800px;
    border-radius: 22px;
    background: #2b2b2b;
    box-shadow: 0 0 0 1px #111, inset 0 0 0 1px #555, 0 48px 90px rgba(0, 0, 0, 0.55), 0 0 34px rgba(0, 0, 0, 0.35);
    display: flex;
    flex-direction: column;
    overflow: hidden;
}

.titlebar {
    height: 56px;
    flex: none;
    background: #262728;
    position: relative;
    display: flex;
    align-items: center;
    justify-content: center;
}
.lights { position: absolute; left: 16px; top: 16px; display: flex; gap: 16px; }
.light { width: 24px; height: 24px; border-radius: 50%; display: block; }
.red { background: #ee6a5f; }
.yellow { background: #f5bf4f; }
.green { background: #61c554; }
.title { color: #9a9a9a; font-family: Inter, sans-serif; font-weight: 700; font-size: 26px; padding-bottom: 1px; }

.main { flex: 1; display: flex; min-height: 0; }

/* sidebar */
.sidebar { width: 496px; flex: none; display: flex; position: relative; border-right: 2px solid #3a3a3a; overflow: hidden; }
.side-list { width: 470px; flex: none; overflow: hidden; }
.rail { width: 24px; flex: none; }
.thumb { height: 735px; background: #666; border-radius: 0 0 5px 5px; }
.thumb-thin { position: absolute; left: 488px; top: 808px; width: 4px; height: 80px; background: #555; border-radius: 2px; }

.proj {
    height: 73px;
    background: #2c323c;
    border-bottom: 2px solid #2a3d5e;
    display: flex;
    align-items: center;
    color: #e4e4e6;
    font-size: 26px;
    padding-left: 32px;
    gap: 20px;
}
.proj-ic { width: 40px; height: 40px; }

.sec { display: flex; align-items: center; padding-left: 28px; color: #bdbdbd; }
.sec-asm { height: 65px; }
.sec-comp { height: 63px; padding-top: 7px; padding-bottom: 4px; }
.sec-more { width: 28px; height: 28px; color: #777; }
.sec-ic { width: 40px; height: 40px; margin-left: 20px; }
.sec-name { font-size: 26px; font-weight: 500; margin-left: 17px; flex: 1; }
.sec-up { width: 28px; height: 28px; color: #777; margin-left: 24px; margin-right: 24px; }
.badge { background: #555; color: #eee; border-radius: 6px; height: 32px; min-width: 37px; padding: 0 8px; font-size: 24px; display: flex; align-items: center; justify-content: center; margin-right: 24px; }
.sec-comp .badge { min-width: 51px; margin-right: 0; }

.empty { height: 68px; border-bottom: 2px solid #363636; font-style: italic; color: #777; font-size: 24px; letter-spacing: 0.3px; padding-left: 58px; display: flex; align-items: center; }
.gen { height: 65px; border-bottom: 2px solid #363636; display: flex; align-items: center; color: #3f84e0; font-size: 26px; padding-left: 70px; gap: 19px; }
.gen .ic { width: 40px; height: 40px; }
.manage { height: 82px; border-bottom: 2px solid #363636; display: flex; align-items: center; font-style: italic; color: #666; font-size: 24px; letter-spacing: 1.2px; padding-left: 17px; }
.manage span { flex: 1; }
.trash { width: 40px; height: 40px; color: #6b3936; margin-right: 2px; }
.close { width: 46px; height: 46px; color: #6e6e6e; margin-left: 19px; margin-right: 26px; }

.grp { height: 48px; display: flex; align-items: center; padding: 0 16px 4px 46px; color: #7c7c7c; }
.grp-ic { width: 36px; display: flex; justify-content: center; flex: none; }
.grp-name { flex: 1; margin-left: 10px; font-size: 21px; letter-spacing: 1.5px; }
.count { background: #5a5a5a; color: #eee; border-radius: 5px; height: 31px; min-width: 28px; padding: 0 6px; font-size: 21px; display: flex; align-items: center; justify-content: center; margin-top: 2px; letter-spacing: 1px; }

.item { height: 78px; display: flex; align-items: center; padding-left: 56px; color: #8a8a8a; }
.item.one { height: 64px; padding-bottom: 3px; }
.item.cut { align-items: flex-start; padding-top: 8px; }
.cut .item-ic { margin-top: 32px; }
.item-ic { width: 36px; display: flex; justify-content: center; flex: none; }
.item-txt { margin-left: 16px; min-width: 0; }
.item-name { color: #e2e2e2; font-size: 25px; line-height: 30px; letter-spacing: 0.6px; }
.item-sub { color: #6a6a6a; font-size: 19.4px; line-height: 30px; letter-spacing: 0.3px; white-space: nowrap; }
.item-sub b { color: #777; font-weight: 500; }
.item-sub i { font-style: normal; margin: 0 8px; }

.ic-std { width: 32px; height: 32px; }
.ic-brk { width: 34px; height: 24px; }
.ic-circ { width: 30px; height: 30px; }
.ic-dsub { width: 34px; height: 16px; }
.ic-ring { width: 32px; height: 15px; }
.grp .ic-brk, .grp .ic-dsub { width: 30px; }
.grp .ic-circ { width: 28px; height: 28px; }
.grp .ic-ring { width: 28px; height: 13px; }

/* canvas */
.canvas {
    flex: 1;
    position: relative;
    overflow: hidden;
    background-color: #2b2b2b;
    background-image:
        linear-gradient(to right, #434343 1px, transparent 1px),
        linear-gradient(to bottom, #434343 1px, transparent 1px),
        linear-gradient(to right, #313131 1px, transparent 1px),
        linear-gradient(to bottom, #313131 1px, transparent 1px);
    background-size: 36.1px 36.1px, 36.1px 36.1px, 7.22px 7.22px, 7.22px 7.22px;
    background-position: 9px 32.6px, 9px 32.6px, 9px 32.6px, 9px 32.6px;
}
.wires { position: absolute; left: 0; top: 0; width: 2207px; height: 1696px; }
.w path { fill: none; stroke: #8f8f8f; }
.w .w4 { stroke-width: 4.5; }
.w .w5 { stroke-width: 5; }
.w .w6 { stroke-width: 6.5; }
.w .w7 { stroke-width: 7; }
.w .w10 { stroke-width: 10; }
.w .w14 { stroke-width: 14; }
.w .w16 { stroke-width: 16; }
.w .w17 { stroke-width: 17; }
.bp path { fill: #9d9d9d; }

.bp-name { position: absolute; width: 40px; height: 18px; line-height: 18px; text-align: center; font-size: 14px; font-weight: 500; color: #383838; }
.at-bp1 { left: 1297px; top: 420px; }
.at-bp2 { left: 1464px; top: 420px; }
.at-bp3 { left: 1465px; top: 608px; }
.at-bp5 { left: 1465px; top: 796px; }
.at-bp6 { left: 1465px; top: 983px; }
.at-bp7 { left: 1465px; top: 1172px; }
.at-bp8 { left: 1464px; top: 1361px; }
.at-bp4 { left: 1261px; top: 643px; color: #4c4c4c; }

.node {
    position: absolute;
    background: #393939;
    border: 2px solid #858585;
    border-radius: 6px;
    display: flex;
    align-items: center;
    justify-content: center;
    padding: 0 10px;
}
.bus { flex-direction: column; padding-top: 6px; }
.bus-ic { width: 26px; height: 24px; color: #ddd; margin-bottom: 13px; }
.name { color: #eee; font-size: 20px; font-weight: 500; line-height: 20px; white-space: nowrap; }
.desc { color: #7f7f7f; font-size: 14px; line-height: 20px; white-space: nowrap; letter-spacing: 0.2px; }
.body { display: flex; align-items: center; }
.mfg + .body { margin-left: auto; }
.node-ic { width: 32px; margin-right: 10px; color: #ddd; }
.ic-bus { height: 28px; }
.ic-bat { height: 32px; }
.ic-sub { height: 15px; }
.ic-cir { height: 28px; }
.ic-oth { height: 30px; }
.mfg { display: flex; flex-direction: column; justify-content: center; background: #444; border-radius: 3px; height: 35px; padding: 0 6px; white-space: nowrap; font-size: 12px; line-height: 16px; color: #8a8a8a; flex: none; }
.mfg b { font-weight: 400; font-size: 13px; color: #bcbcbc; }

.at-mstr { left: 80px; top: 348px; width: 195px; height: 232px; }
.at-av { left: 80px; top: 616px; width: 195px; height: 312px; }
.at-cb1 { left: 688px; top: 341px; width: 333px; height: 51px; }
.at-cb2 { left: 688px; top: 413px; width: 333px; height: 51px; }
.at-cb5 { left: 688px; top: 486px; width: 333px; height: 51px; }
.at-bat1 { left: 1657px; top: 182px; width: 254px; height: 87px; }
.at-bat2 { left: 1093px; top: 1419px; width: 275px; height: 95px; }
.at-hdxp { left: 1737px; top: 392px; width: 391px; height: 72px; }
.at-gps { left: 1737px; top: 580px; width: 391px; height: 73px; }
.at-adsb { left: 1737px; top: 768px; width: 391px; height: 73px; }
.at-audio { left: 1737px; top: 957px; width: 391px; height: 72px; }
.at-xpdr { left: 1737px; top: 1144px; width: 391px; height: 73px; }
.at-hdxs { left: 1737px; top: 1332px; width: 391px; height: 73px; }

.gnd-group { position: absolute; left: 725px; top: 580px; width: 376px; height: 152px; }
.dash { position: absolute; left: 0; top: 0; width: 376px; height: 152px; fill: none; stroke: #666; stroke-width: 1.5; stroke-dasharray: 14 8; }
.gnd { left: 14px; top: 14px; width: 203px; height: 124px; }

.ports { position: absolute; display: flex; flex-direction: column; }
.ports-mstr { left: 283px; top: 360px; }
.ports-mstr .port { height: 36.2px; }
.ports-av { left: 283px; top: 616px; }
.ports-av .port { height: 29px; }
.ports-av .chip { width: 66px; }
.ports-av .chip-s { width: 59px; }
.ports-gnd { left: 949px; top: 595.5px; }
.ports-gnd .port { height: 28.9px; }
.ports-gnd .pin span { width: 44px; }
.port { display: flex; align-items: center; gap: 6px; }

.pin { display: flex; align-items: center; color: #c4c4c4; font-size: 14px; }
.pin::before, .pin::after {
    content: "";
    width: 11px;
    height: 11px;
    background: linear-gradient(#777, #777) center / 100% 2px no-repeat;
    flex: none;
}
.pin::before { border-left: 2px solid #777; }
.pin::after { border-right: 2px solid #777; }
.pin span { width: 43px; height: 20px; border: 2px solid #6e6e6e; border-radius: 10px; background: #3a3a3a; display: flex; align-items: center; justify-content: center; }
.pin-s { font-weight: 500; }
.pin-s::before, .pin-s::after { width: 8px; }
.pin-s span { width: 42px; }
.pin-o { font-weight: 500; }
.pin-o::before, .pin-o::after { width: 9px; }
.pin-o span { width: 46px; }

.chip {
    width: 59px;
    height: 16px;
    border: 2px solid #737373;
    border-radius: 8px;
    background: #333;
    color: #f2f2f2;
    font-size: 11.5px;
    font-weight: 500;
    display: flex;
    align-items: center;
    justify-content: center;
    gap: 4px;
    flex: none;
}
.ring { width: 17px; height: 8px; fill: currentColor; flex: none; }
.cb-in .chip { width: 66px; }
.cb-out .chip { width: 66px; }
.cb-in, .cb-out { position: absolute; height: 20px; }
.cb-in { left: 550px; gap: 7px; }
.cb-out { left: 1029px; gap: 8px; }
.at-cb1-row { top: 353px; }
.at-cb2-row { top: 432.5px; }
.at-cb5-row { top: 505px; }

.wl {
    position: absolute;
    height: 19px;
    width: 68px;
    display: flex;
    align-items: center;
    gap: 8px;
    padding-left: 4px;
    background: #2e2e2e;
    border: 1px solid #555;
    border-radius: 4px;
    color: #a8a8a8;
    font-size: 12px;
    white-space: nowrap;
}
.wl b { min-width: 16px; padding: 0 3px; height: 14px; background: #444; color: #f4f4f4; border-radius: 2px; font-size: 15px; font-weight: 500; display: flex; align-items: center; justify-content: center; }
.at-l1 { left: 447px; top: 361px; }
.at-l2 { left: 447px; top: 419px; }
.at-l3 { left: 447px; top: 563px; }
.at-l4 { left: 1198px; top: 374px; }
.at-l5 { left: 1195px; top: 429px; }
.at-l6 { left: 1200px; top: 477px; }
.at-l7 { left: 1265px; top: 531px; }
.at-l8 { left: 1363px; top: 419px; width: 75px; }
.at-g1 { left: 1104px; top: 606px; }
.at-g2 { left: 1104px; top: 631px; }
.at-g3 { left: 1106px; top: 656px; }
.at-g4 { left: 1104px; top: 681px; }
.at-r1 { left: 1493px; top: 246px; }
.at-r2 { left: 1587px; top: 419px; width: 75px; }
.at-r3 { left: 1589px; top: 607px; }
.at-r4 { left: 1589px; top: 795px; }
.at-r5 { left: 1589px; top: 983px; }
.at-r6 { left: 1589px; top: 1171px; }
.at-r7 { left: 1587px; top: 1359px; width: 75px; }
.at-r8 { left: 1388px; top: 1428px; }
.at-t1, .at-t2, .at-t3, .at-t4, .at-t5 { left: 1447px; width: 75px; }
.at-t1 { top: 513px; }
.at-t2 { top: 701px; }
.at-t3 { top: 889px; }
.at-t4 { top: 1077px; }
.at-t5 { top: 1265px; }

/* right panel */
.rpanel { width: 97px; flex: none; border-left: 2px solid #383838; display: flex; flex-direction: column; align-items: center; padding-top: 20px; gap: 28px; color: #a6a6a6; }
.r-ic { width: 52px; height: 52px; margin-left: -2px; }

/* bottom bar */
.bbar {
    height: 48px;
    flex: none;
    border-top: 3px solid #3b3b3b;
    padding-bottom: 2px;
    background: #2c2c2c;
    display: flex;
    align-items: center;
    color: #a8a8a8;
}
.bb-ic { width: 28px; height: 28px; }
.bb-back { margin-left: 31px; color: #888; }
.bb-div { width: 2px; height: 36px; background: #424242; flex: none; display: block; }
.div-a { margin-left: 38px; }
.folder-btn { margin-left: 16px; width: 88px; height: 36px; background: #3c3c3c; border-radius: 4px; display: flex; align-items: center; padding-left: 10px; color: #fff; gap: 4px; flex: none; }
.bb-folder { width: 32px; height: 32px; }
.bb-caret { width: 28px; height: 28px; }
.status { display: flex; align-items: center; font-size: 22px; letter-spacing: 0.9px; color: #b4b4b4; flex: none; }
.dot { width: 11px; height: 11px; border-radius: 50%; background: #6fbb6f; display: block; margin-right: 9px; }
.st-saved { margin-left: 55px; }
.bb-text { font-size: 22px; letter-spacing: 0.9px; color: #c8c8c8; white-space: nowrap; flex: none; }
.bb-dim { color: #8a8a8a; }
.proj-name { margin-left: 38px; }
.bb-pen { width: 24px; height: 24px; margin-left: 7px; color: #777; }
.bb-file { width: 28px; height: 28px; margin-left: 32px; color: #8a8a8a; }
.file-name { margin-left: 8px; }
.bb-caret-dim { color: #888; }
.caret-file { margin-left: 9px; }
.seg { display: flex; align-items: center; margin-left: 54px; height: 30px; font-size: 22px; letter-spacing: 0.9px; flex: none; }
.seg-on { background: #3c3c3c; color: #eee; border-radius: 4px; height: 30px; width: 94px; display: flex; align-items: center; justify-content: center; }
.seg-off { color: #8a8a8a; margin-left: 12px; }
.div-b { margin-left: 24px; }
.tools { display: flex; margin-left: 16px; flex: none; }
.tool { width: 52px; height: 36px; display: flex; align-items: center; justify-content: center; color: #9a9a9a; border-radius: 4px; }
.tool-on { background: #3c3c3c; color: #fff; }
.tool-wire { color: #eee; }
.wire-ic { width: 32px; height: 12px; }
.caret-tool { margin-left: 2px; }
.div-c { margin-left: 10px; }
.nav-l { margin-left: 44px; color: #888; }
.nav-doc { margin-left: 30px; color: #999; width: 28px; }
.sheet { margin-left: 6px; color: #aaa; letter-spacing: 1px; }
.caret-sheet { margin-left: 6px; }
.nav-r { margin-left: 33px; color: #888; }
.err { margin-left: 74px; color: #d9483b; }
.undo { margin-left: 36px; color: #9a9a9a; }
.redo { margin-left: 32px; color: #9a9a9a; }
.div-d { margin-left: 30px; }
.upl { margin-left: 30px; color: #9a9a9a; }
.dnl { margin-left: 35px; color: #9a9a9a; }
.minus { margin-left: 37px; color: #9a9a9a; }
.srch { margin-left: 31px; color: #9a9a9a; }
.zoomv { margin-left: 5px; color: #aaa; }
.plus { margin-left: 35px; color: #9a9a9a; }
.fit { margin-left: 32px; color: #9a9a9a; }
.div-e { margin-left: 30px; }
.gear { margin-left: 31px; color: #9a9a9a; }
.robot { margin-left: 36px; color: #6e6e6e; }
.st-online { margin-left: 38px; }
.st-online .dot { margin-right: 6px; }
```
